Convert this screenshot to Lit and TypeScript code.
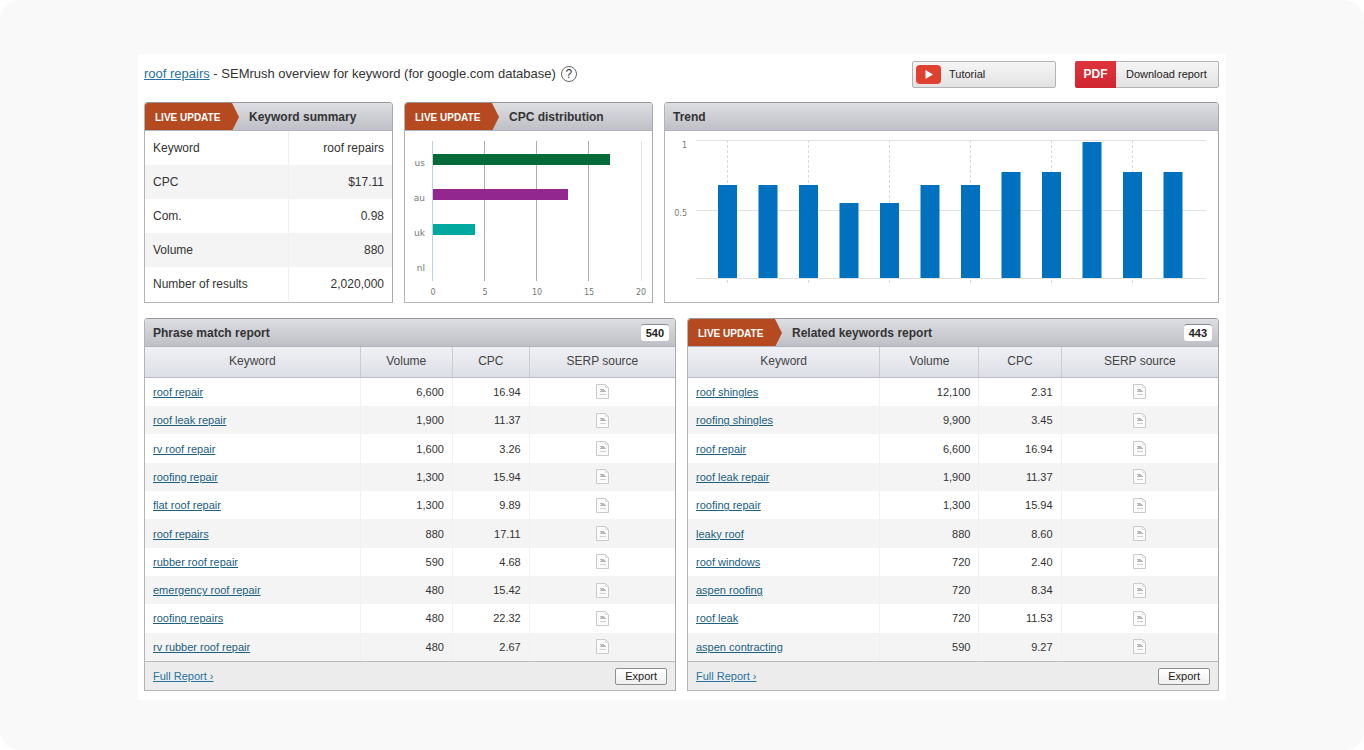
import { LitElement, html, svg, css, nothing } from "lit";
import { customElement, property } from "lit/decorators.js";

type Row = [string, string, string];

const SUMMARY: [string, string][] = [
  ["Keyword", "roof repairs"],
  ["CPC", "$17.11"],
  ["Com.", "0.98"],
  ["Volume", "880"],
  ["Number of results", "2,020,000"],
];

const PHRASE: Row[] = [
  ["roof repair", "6,600", "16.94"],
  ["roof leak repair", "1,900", "11.37"],
  ["rv roof repair", "1,600", "3.26"],
  ["roofing repair", "1,300", "15.94"],
  ["flat roof repair", "1,300", "9.89"],
  ["roof repairs", "880", "17.11"],
  ["rubber roof repair", "590", "4.68"],
  ["emergency roof repair", "480", "15.42"],
  ["roofing repairs", "480", "22.32"],
  ["rv rubber roof repair", "480", "2.67"],
];

const RELATED: Row[] = [
  ["roof shingles", "12,100", "2.31"],
  ["roofing shingles", "9,900", "3.45"],
  ["roof repair", "6,600", "16.94"],
  ["roof leak repair", "1,900", "11.37"],
  ["roofing repair", "1,300", "15.94"],
  ["leaky roof", "880", "8.60"],
  ["roof windows", "720", "2.40"],
  ["aspen roofing", "720", "8.34"],
  ["roof leak", "720", "11.53"],
  ["aspen contracting", "590", "9.27"],
];

const CPC_BARS = [
  { label: "us", width: 177, color: "#046b38" },
  { label: "au", width: 135, color: "#92278f" },
  { label: "uk", width: 42, color: "#00a99d" },
  { label: "nl", width: 0, color: "#00a99d" },
];

const TREND = [93, 93, 93, 75, 75, 93, 93, 106, 106, 136, 106, 106];

const base = css`
  :host {
    display: block;
    font-family: "Liberation Sans", Arial, sans-serif;
    color: #333;
  }
  * {
    box-sizing: border-box;
  }
  table {
    width: 100%;
    border-collapse: collapse;
    table-layout: fixed;
  }
  a {
    color: #20607f;
    text-decoration: underline;
    text-underline-offset: 1px;
  }
  .chart {
    display: block;
    width: 100%;
    height: auto;
  }
`;

@customElement("report-panel")
export class ReportPanel extends LitElement {
  @property() heading = "";
  @property({ type: Boolean }) live = false;
  @property() count = "";

  static styles = [
    base,
    css`
      :host {
        border: 1px solid #b4b4b6;
        border-top-color: #98989c;
        border-right-color: #a9a9ab;
        border-radius: 4px 4px 0 0;
        background: #fff;
        min-width: 0;
      }
      .head {
        display: flex;
        align-items: center;
        height: 28px;
        border-bottom: 1px solid #b2b3b8;
        border-radius: 3px 3px 0 0;
        overflow: hidden;
        background: linear-gradient(#dcdee2, #bfc0c7);
      }
      .tag {
        align-self: stretch;
        display: flex;
        align-items: center;
        width: 94px;
        padding-left: 10px;
        margin-bottom: -1px;
        background: #b54a20;
        color: #fff;
        font-size: 10px;
        font-weight: bold;
        white-space: nowrap;
        clip-path: polygon(0 0, 87px 0, 100% 50%, 87px 100%, 0 100%);
      }
      .title {
        margin: 0;
        padding-left: 8px;
        font-size: 12px;
        line-height: 16px;
        white-space: nowrap;
      }
      .tag + .title {
        padding-left: 10px;
      }
      .count {
        margin-left: auto;
        margin-right: 6px;
        padding: 0 5px;
        border-top: 1px solid #8c8c90;
        border-radius: 3px;
        background: #fff;
        font-size: 11px;
        font-weight: bold;
        line-height: 16px;
        color: #222;
      }
    `,
  ];

  render() {
    return html`
      <header class="head">
        ${this.live ? html`<span class="tag">LIVE UPDATE</span>` : nothing}
        <h2 class="title">${this.heading}</h2>
        ${this.count ? html`<span class="count">${this.count}</span>` : nothing}
      </header>
      <slot></slot>
    `;
  }
}

@customElement("keyword-table")
export class KeywordTable extends LitElement {
  @property({ attribute: false }) rows: Row[] = [];
  @property({ type: Boolean, reflect: true }) related = false;

  static styles = [
    base,
    css`
      table {
        height: 314px;
      }
      .kw { width: 40.6%; }
      .vol { width: 17.4%; }
      .cpc { width: 14.5%; }
      :host([related]) .kw { width: 36.2%; }
      :host([related]) .vol { width: 18.7%; }
      :host([related]) .cpc { width: 15.5%; }
      thead tr {
        height: 30px;
        background: linear-gradient(#f0f1f5, #dddfe6);
      }
      th {
        padding: 0 0 1px;
        border-right: 1px solid #cbccd2;
        border-bottom: 1px solid #b9bac0;
        font-size: 12px;
        font-weight: normal;
        line-height: 16px;
        color: #444;
      }
      tbody tr:nth-child(even) {
        background: #f4f4f4;
      }
      td {
        padding: 0 8px;
        border-right: 1px solid #f1f1f1;
        font-size: 11px;
        line-height: 16px;
        text-align: right;
        white-space: nowrap;
      }
      th:last-child,
      td:last-child {
        border-right: 0;
      }
      td:first-child {
        text-align: left;
      }
      td:last-child {
        text-align: center;
      }
      .source {
        display: block;
        width: 13px;
        height: 15px;
        margin: 0 auto;
      }
      .foot {
        display: flex;
        align-items: center;
        justify-content: space-between;
        height: 29px;
        padding: 0 8px;
        border-top: 1px solid #bdbdbd;
        background: #ececec;
        font-size: 11px;
      }
      .foot a {
        color: #2672a0;
      }
      .export {
        height: 17px;
        padding: 0 9px;
        border: 1px solid #8f8f8f;
        border-radius: 2px;
        background: linear-gradient(#fff, #efefef);
        font: 11px/14px "Liberation Sans", Arial, sans-serif;
        color: #222;
      }
    `,
  ];

  render() {
    return html`
      <table>
        <thead>
          <tr>
            <th class="kw" scope="col">Keyword</th>
            <th class="vol" scope="col">Volume</th>
            <th class="cpc" scope="col">CPC</th>
            <th scope="col">SERP source</th>
          </tr>
        </thead>
        <tbody>
          ${this.rows.map(
            ([kw, vol, cpc]) => html`
              <tr>
                <td><a href="#">${kw}</a></td>
                <td>${vol}</td>
                <td>${cpc}</td>
                <td>
                  <a class="source" href="#" aria-label="SERP source">
                    <svg width="13" height="15" viewBox="0 0 13 15" fill="none" stroke="#cacaca">
                      <path d="M.5.5H9.5L12.5 3.500V14.500H.5Z" fill="#fbfbfb" />
                      <path d="M9.500.5V3.500H12.500" stroke="#dcdcdc" />
                      <path d="M4 5.500H8M4 7.500H10M5 6.500H9" stroke="#b8b8b8" />
                      <path d="M4 10.500H10" stroke="#cfcfcf" />
                    </svg>
                  </a>
                </td>
              </tr>
            `
          )}
        </tbody>
      </table>
      <div class="foot">
        <a href="#">Full Report ›</a>
        <button class="export" type="button">Export</button>
      </div>
    `;
  }
}

@customElement("app-root")
export class AppRoot extends LitElement {
  static styles = [
    base,
    css`
      .page {
        min-height: 100vh;
        padding: 54px 138px 50px;
        border-radius: 20px;
        background: #f9f9f9;
      }
      .sheet {
        display: grid;
        gap: 15px;
        padding: 7px 7px 9px 6px;
        background: #fff;
      }
      .top {
        display: flex;
        align-items: center;
        height: 26px;
      }
      .heading {
        margin: 0;
        font-size: 13px;
        font-weight: normal;
        line-height: 20px;
      }
      .heading a {
        color: #2672a0;
      }
      .help {
        width: 16px;
        height: 16px;
        margin: 0 auto 0 5px;
        padding: 0;
        border: 1px solid #666;
        border-radius: 50%;
        background: #fff;
        font: 12px/14px "Liberation Sans", Arial, sans-serif;
        color: #333;
      }
      .action {
        display: flex;
        align-items: center;
        width: 144px;
        height: 27px;
        padding: 0;
        margin-left: 19px;
        border: 1px solid #b3b3b3;
        border-radius: 2px;
        background: linear-gradient(#f6f6f6, #e2e2e2);
        font: 11px/16px "Liberation Sans", Arial, sans-serif;
        color: #222;
        white-space: nowrap;
      }
      .play {
        margin: 0 8px 0 3px;
      }
      .pdf {
        width: 41px;
        margin: -1px 10px -1px -1px;
        border-radius: 2px 0 0 2px;
        background: linear-gradient(#e0343c, #cf262f);
        font: bold 12px/27px "Liberation Sans", Arial, sans-serif;
        color: #fff;
      }
      .overview {
        display: grid;
        grid-template-columns: 249fr 249fr 555fr;
        gap: 11px;
      }
      .reports {
        display: grid;
        grid-template-columns: 1fr 1fr;
        gap: 11px;
      }
      .summary tr:nth-child(even) {
        background: #f4f4f4;
      }
      .summary th,
      .summary td {
        height: 34px;
        padding: 0 8px;
        font-size: 12px;
        font-weight: normal;
        text-align: left;
        white-space: nowrap;
      }
      .summary th {
        width: 58%;
        border-right: 1px solid #f0f0f0;
      }
      .summary td {
        text-align: right;
      }
      .axis {
        font-family: "DejaVu Sans", sans-serif;
        font-size: 9px;
        fill: #777;
      }
      .small {
        font-size: 8px;
      }
    `,
  ];

  private cpcChart() {
    return html`
      <svg class="chart" viewBox="0 -1 247 171" role="img" aria-label="CPC distribution">
        <g stroke="#adadad">
          <path d="M27.5 9V149" stroke="#c0d0e0" />
          <path d="M79.5 9V149M131.5 9V149M183.5 9V149" />
          <path d="M236.5 9V149" stroke="#e0e0e0" />
        </g>
        ${CPC_BARS.map(
          (b, i) => svg`
            <rect x="28" y=${22 + i * 35} width=${b.width} height="11" fill=${b.color}></rect>
            <text class="axis" x="20" y=${34 + i * 35} text-anchor="end">${b.label}</text>`
        )}
        ${[0, 5, 10, 15, 20].map(
          (v, i) => svg`<text class="axis small" x=${28 + i * 52} y="163" text-anchor="middle">${v}</text>`
        )}
      </svg>
    `;
  }

  private trendChart() {
    return html`
      <svg class="chart" viewBox="0 -1 553 171" role="img" aria-label="Trend">
        <path d="M31 8.5H541M31 78.5H541M31 146.5H541" stroke="#e2e2e2" />
        ${TREND.map((h, i) => {
          const x = 53 + i * 40.5;
          return svg`
            ${i % 2 ? nothing : svg`<path d="M${Math.round(x) + 9.5} 8V151" stroke="#dadada" stroke-dasharray="3 2"></path>`}
            <rect x=${x} y=${146 - h} width="19" height=${h} fill="#0071bf"></rect>`;
        })}
        <text class="axis small" x="22" y="16" text-anchor="end">1</text>
        <text class="axis small" x="22" y="84" text-anchor="end">0.5</text>
      </svg>
    `;
  }

  render() {
    return html`
      <div class="page">
        <main class="sheet">
          <div class="top">
            <h1 class="heading">
              <a href="#">roof repairs</a> - SEMrush overview for keyword (for google.com database)
            </h1>
            <button class="help" type="button" aria-label="Help">?</button>
            <button class="action" type="button">
              <svg class="play" width="25" height="19" viewBox="0 0 25 19">
                <rect width="25" height="19" rx="4" fill="#e0402f" />
                <path d="M9.500 5V14L17 9.500Z" fill="#fff" />
              </svg>
              Tutorial
            </button>
            <button class="action" type="button"><span class="pdf">PDF</span>Download report</button>
          </div>
          <div class="overview">
            <report-panel heading="Keyword summary" live>
              <table class="summary">
                <tbody>
                  ${SUMMARY.map(([k, v]) => html`<tr><th scope="row">${k}</th><td>${v}</td></tr>`)}
                </tbody>
              </table>
            </report-panel>
            <report-panel heading="CPC distribution" live>${this.cpcChart()}</report-panel>
            <report-panel heading="Trend">${this.trendChart()}</report-panel>
          </div>
          <div class="reports">
            <report-panel heading="Phrase match report" count="540">
              <keyword-table .rows=${PHRASE}></keyword-table>
            </report-panel>
            <report-panel heading="Related keywords report" count="443" live>
              <keyword-table related .rows=${RELATED}></keyword-table>
            </report-panel>
          </div>
        </main>
      </div>
    `;
  }
}
